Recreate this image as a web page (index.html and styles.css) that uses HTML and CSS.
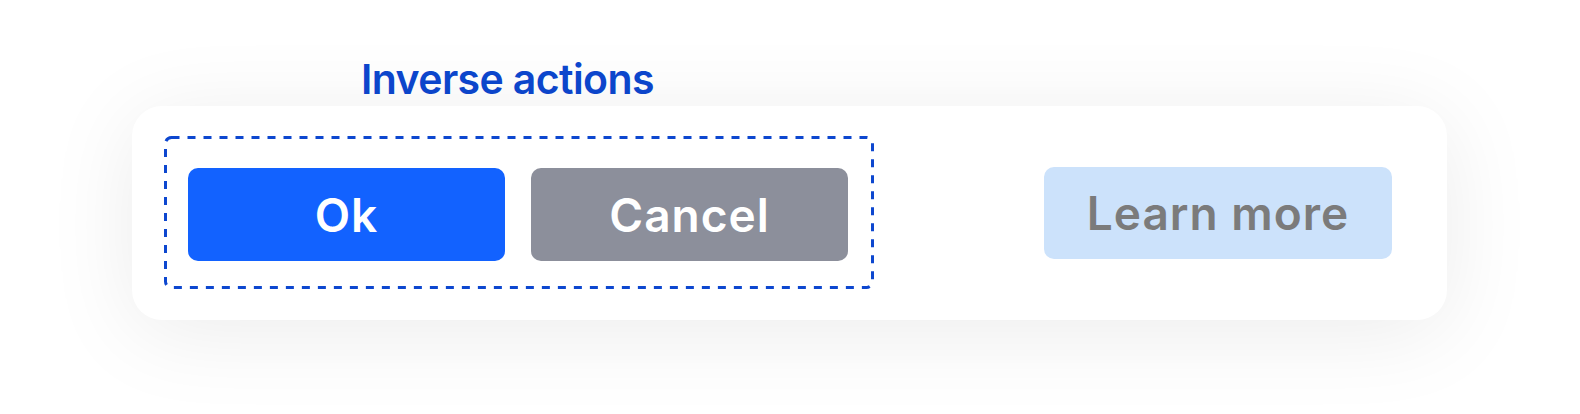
FILE: index.html
```html
<!DOCTYPE html>
<html lang="en">
<head>
<meta charset="utf-8">
<title>Inverse actions</title>
<link rel="stylesheet" href="styles.css">
</head>
<body>
<main class="stage">
  <section class="demo">
    <h2 class="label">Inverse actions</h2>
    <div class="card">
      <div class="group">
        <svg class="dash-frame" width="710" height="153" viewBox="0 0 710 153" aria-hidden="true">
          <rect x="1.5" y="1.5" width="707" height="150" rx="6" ry="6" fill="none" stroke="#0d47cf" stroke-width="3" stroke-dasharray="8 8"/>
        </svg>
        <button class="btn btn-primary">Ok</button>
        <button class="btn btn-secondary">Cancel</button>
      </div>
      <button class="btn btn-tertiary">Learn more</button>
    </div>
  </section>
</main>
</body>
</html>
```
FILE: styles.css
```css
* { box-sizing: border-box; }
html, body {
  margin: 0;
  padding: 0;
  background: #ffffff;
  width: 1580px;
  height: 414px;
  overflow: hidden;
}
.stage {
  padding: 58px 0 0 132px;
  font-family: Inter, "Noto Sans", sans-serif;
}
.demo {
  display: flex;
  flex-direction: column;
  width: 1315px;
}
.label {
  margin: 0 0 6px 229px;
  font-size: 41px;
  line-height: 42px;
  font-weight: 600;
  color: #0d47cf;
  letter-spacing: -0.6px;
}
.card {
  display: flex;
  align-items: center;
  justify-content: space-between;
  height: 214px;
  padding: 30px 55px 31px 32px;
  background: #ffffff;
  border-radius: 30px;
  box-shadow: 0 12px 90px rgba(0, 0, 0, 0.08);
}
.group {
  position: relative;
  display: flex;
  gap: 26px;
  width: 710px;
  height: 153px;
  padding: 32px 26px 28px 24px;
}
.dash-frame {
  position: absolute;
  left: 0;
  top: 0;
}
.btn {
  height: 93px;
  width: 317px;
  border: 0;
  border-radius: 10px;
  font-family: Inter, "Noto Sans", sans-serif;
  font-size: 46px;
  font-weight: 600;
  color: #ffffff;
  letter-spacing: 1px;
  padding: 0;
}
.btn-primary { background: #1262ff; }
.btn-secondary { background: #8c8f9b; }
.btn-tertiary {
  width: 348px;
  height: 92px;
  background: #cce2fb;
  color: #7b7b7b;
}
```
